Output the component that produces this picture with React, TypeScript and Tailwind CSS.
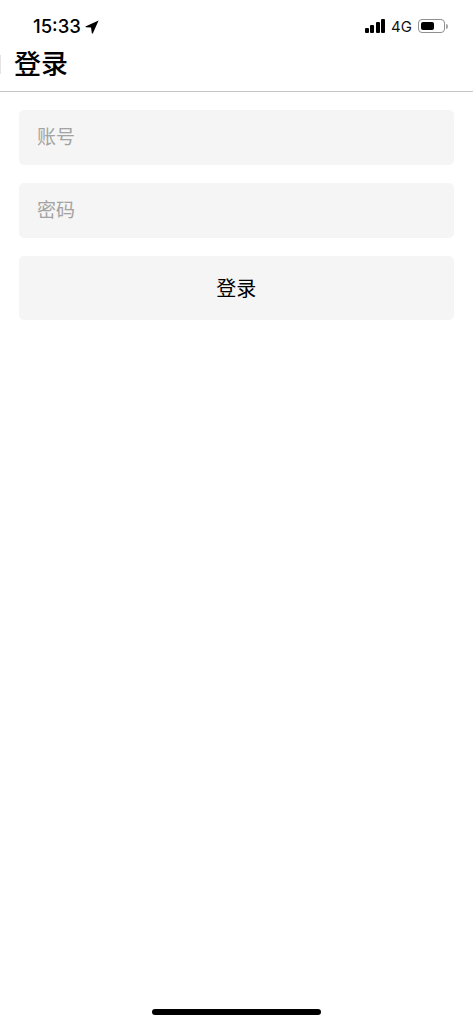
const cjk = "font-['Roboto','Noto_Sans_CJK_SC',sans-serif]";

function StatusBar() {
  return (
    <div className="h-[43px] flex items-start justify-between pl-[33px] pr-[25px] pt-[15px]">
      <div className="flex items-center gap-[4px] h-[23px]">
        <span className="text-[18.5px] leading-[23px] text-black font-['Inter',sans-serif] font-medium">15:33</span>
        <svg width="14" height="14" viewBox="0 0 14 14" fill="#000">
          <path d="M13.6 0.6 L0.4 6.4 L0.9 7.3 L6 7.6 L6.9 13.4 L7.8 13.6 Z" />
        </svg>
      </div>
      <div className="flex items-center h-[23px]">
        <div className="flex items-end gap-[1.5px] h-[14px] mr-[6px] mt-[-1px]">
          <div className="w-[4px] h-[5px] bg-black rounded-[1px]" />
          <div className="w-[4px] h-[8px] bg-black rounded-[1px]" />
          <div className="w-[4px] h-[11px] bg-black rounded-[1px]" />
          <div className="w-[4px] h-[14px] bg-black rounded-[1px]" />
        </div>
        <span className="text-[15px] leading-[23px] text-[#111] font-['Inter',sans-serif] mr-[6px]">4G</span>
        <div className="w-[27px] h-[14px] mt-[-1px] border border-[#8f8f8f] rounded-[4px] p-[2px]">
          <div className="w-[13px] h-full bg-black rounded-[2px]" />
        </div>
        <div className="w-[2px] h-[5px] mt-[-1px] bg-[#a5a5a5] rounded-r-[2px] ml-[1px]" />
      </div>
    </div>
  );
}

function Field({ label }: { label: string }) {
  return (
    <div className="h-[55px] bg-[#f5f5f5] rounded-[5px] flex items-center pl-[18.5px] pr-[18px] pt-[2px]">
      <input
        placeholder={label}
        className={`w-full bg-transparent outline-none text-[19px] text-black placeholder:text-[#a3a3a3] ${cjk}`}
      />
    </div>
  );
}

export default function App() {
  return (
    <div className="relative h-[1024px] bg-white overflow-hidden">
      <StatusBar />
      <div className="relative h-[49px] border-b border-[#c6c6c6] pl-[14px] flex items-center">
        <div className="absolute left-0 top-[12px] w-[1px] h-[19px] bg-[#e4e4e4]" />
        <h1 className={`text-[27px] leading-[44px] text-black font-medium pb-[4px] ${cjk}`}>登录</h1>
      </div>
      <div className="flex flex-col gap-[18px] pl-[18.5px] pr-[19px] pt-[18px]">
        <Field label="账号" />
        <Field label="密码" />
        <button className={`h-[64px] bg-[#f5f5f5] rounded-[5px] text-[20px] text-black pt-[2px] ${cjk}`}>登录</button>
      </div>
      <div className="absolute left-[152px] bottom-[9px] w-[169px] h-[6px] bg-black rounded-full" />
    </div>
  );
}
